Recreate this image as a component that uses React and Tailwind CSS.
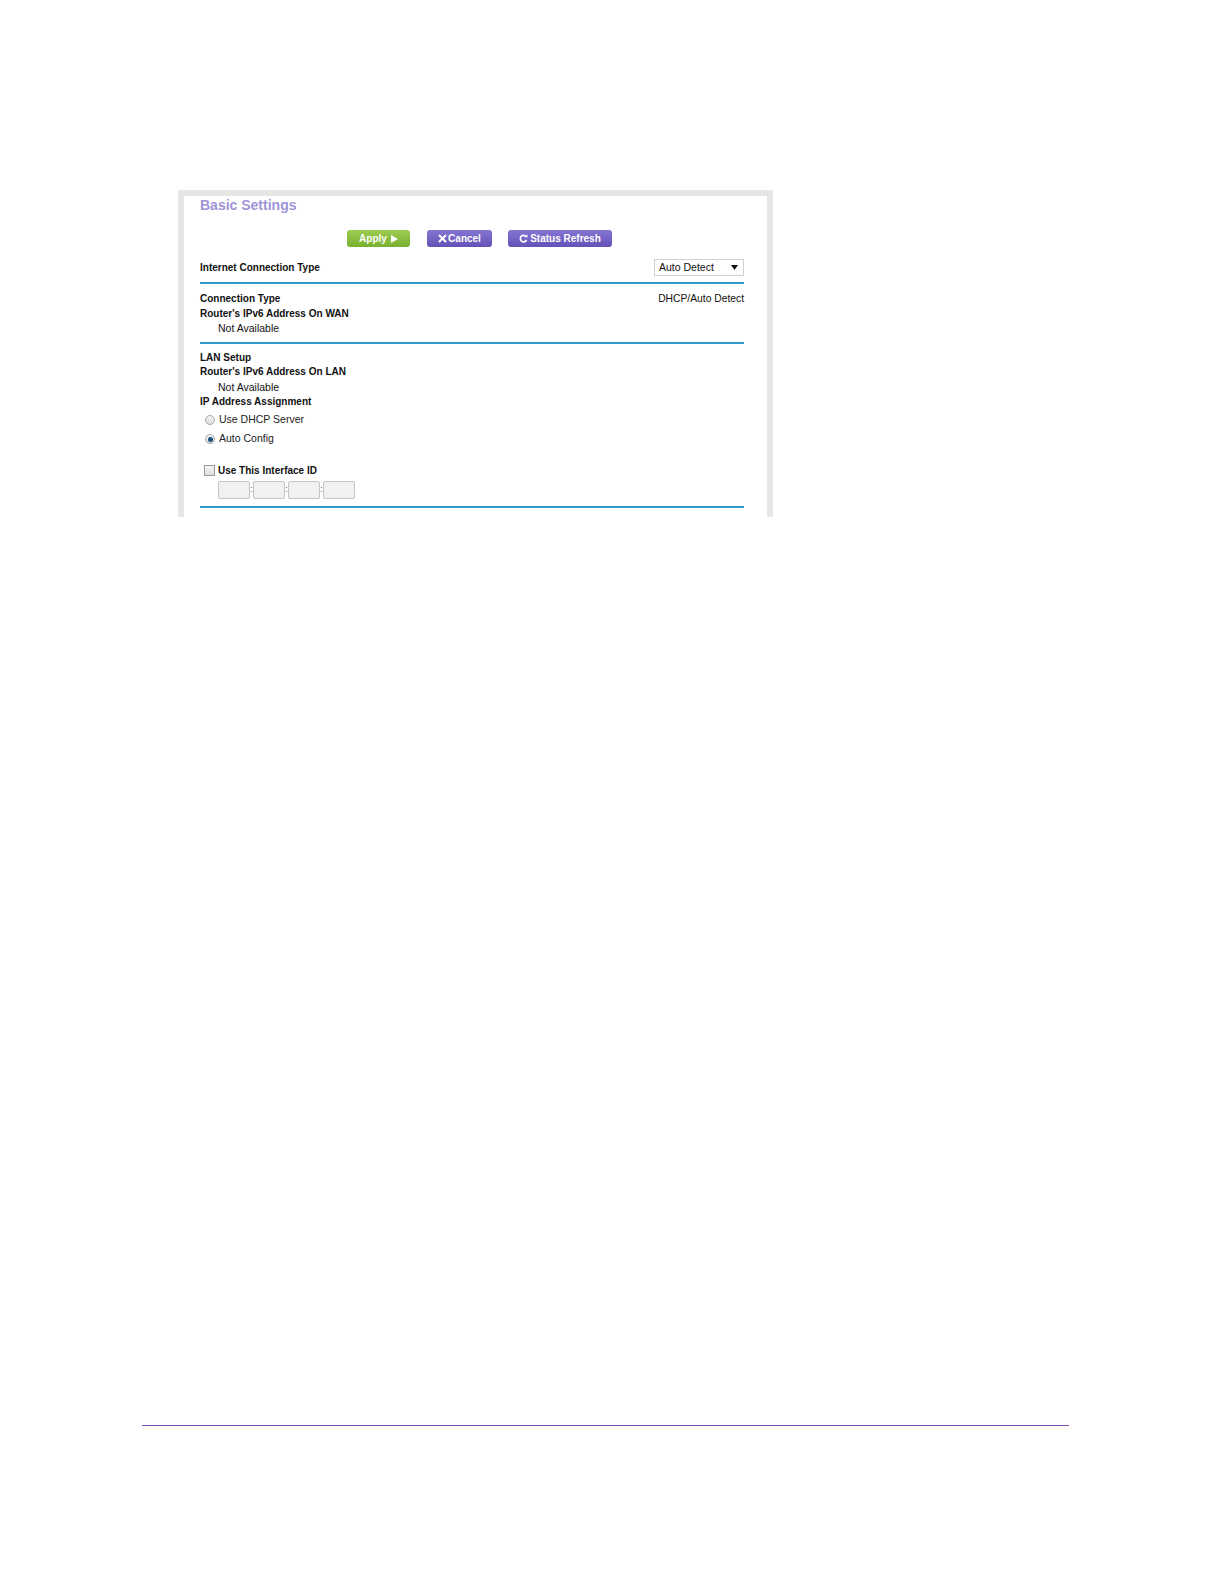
import React from "react";

const font = { fontFamily: '"Liberation Sans", Arial, sans-serif' };

function Radio({ checked, label }) {
  return (
    <div className="flex items-center h-[19px] pl-[5px]">
      <span className="w-[10px] h-[10px] rounded-full border border-[#a8a8a8] bg-gradient-to-b from-[#f4f4f4] to-[#dcdcdc] flex items-center justify-center">
        {checked && <span className="w-[5px] h-[5px] rounded-full bg-[#1d4f7a]" />}
      </span>
      <span className="ml-[4px] text-[10.5px] text-[#222]">{label}</span>
    </div>
  );
}

function IdBox() {
  return <span className="w-[32px] h-[18px] border border-[#c4c4c4] bg-[#f1f1f1] rounded-[2px]" />;
}

export default function App() {
  return (
    <div className="w-full h-[1584px] overflow-hidden bg-white" style={font}>
      <div className="pt-[190px] pl-[178px]">
        <div className="w-[595px] h-[327px] border-t-[6px] border-x-[6px] border-[#e6e6e6] bg-white pl-[16px] pr-[23px]">
          <div className="text-[14px] leading-[18px] font-bold text-[#9d94d8]">Basic Settings</div>
          <div className="flex mt-[16px] pl-[147px] gap-[16px]">
            <div className="w-[63px] h-[17px] rounded-[3px] bg-gradient-to-b from-[#9dcc52] to-[#78b02e] flex items-center justify-center text-white text-[10px] font-bold">
              Apply
              <svg width="7" height="8" viewBox="0 0 7 8" className="ml-[4px]"><path d="M0 0 L7 4 L0 8 Z" fill="white" /></svg>
            </div>
            <div className="w-[65px] h-[17px] rounded-[3px] bg-gradient-to-b from-[#8575d2] to-[#6452b8] flex items-center justify-center text-white text-[10px] font-bold ml-[1px]">
              <svg width="9" height="9" viewBox="0 0 9 9" className="mr-[1px]"><path d="M1 1 L8 8 M8 1 L1 8" stroke="white" strokeWidth="2" /></svg>
              Cancel
            </div>
            <div className="w-[104px] h-[17px] rounded-[3px] bg-gradient-to-b from-[#8575d2] to-[#6452b8] flex items-center justify-center text-white text-[10px] font-bold">
              <svg width="9" height="9" viewBox="0 0 10 10" className="mr-[2px]"><path d="M8 3 A3.6 3.6 0 1 0 8.4 6.5" stroke="white" strokeWidth="1.8" fill="none" /><path d="M6 3.5 L9.5 3.5 L9.5 0.5 Z" fill="white" /></svg>
              Status Refresh
            </div>
          </div>
          <div className="flex items-center justify-between mt-[12px] h-[17px]">
            <span className="text-[10px] font-bold text-[#111]">Internet Connection Type</span>
            <div className="w-[90px] h-[17px] border border-[#d0d0d0] flex items-center justify-between pl-[4px] pr-[5px] text-[10.5px] text-[#111]">
              Auto Detect
              <svg width="7" height="5" viewBox="0 0 7 5"><path d="M0 0 L7 0 L3.5 5 Z" fill="#111" /></svg>
            </div>
          </div>
          <div className="mt-[6px] h-[2px] bg-[#2f9dc8]" />
          <div className="mt-[8px] text-[10.5px] leading-[14.5px] text-[#111]">
            <div className="flex justify-between">
              <span className="font-bold text-[10px]">Connection Type</span>
              <span className="text-[10.3px]">DHCP/Auto Detect</span>
            </div>
            <div className="font-bold text-[10px]">Router's IPv6 Address On WAN</div>
            <div className="pl-[18px]">Not Available</div>
          </div>
          <div className="mt-[6px] h-[2px] bg-[#2f9dc8]" />
          <div className="mt-[7px] text-[10.5px] leading-[14.8px] text-[#111]">
            <div className="font-bold text-[10px]">LAN Setup</div>
            <div className="font-bold text-[10px]">Router's IPv6 Address On LAN</div>
            <div className="pl-[18px]">Not Available</div>
            <div className="font-bold text-[10px]">IP Address Assignment</div>
          </div>
          <div className="mt-[1px]">
            <Radio label="Use DHCP Server" />
            <Radio checked label="Auto Config" />
          </div>
          <div className="mt-[15px] flex items-center h-[14px] pl-[4px]">
            <span className="w-[11px] h-[11px] border border-[#9a9a9a] bg-gradient-to-b from-[#f6f6f6] to-[#dedede]" />
            <span className="ml-[3px] text-[10px] font-bold text-[#111]">Use This Interface ID</span>
          </div>
          <div className="flex items-center pl-[18px] mt-[3px] text-[9px] text-[#555]">
            <IdBox />
            <span className="w-[3px] text-center">:</span>
            <IdBox />
            <span className="w-[3px] text-center">:</span>
            <IdBox />
            <span className="w-[3px] text-center">:</span>
            <IdBox />
          </div>
          <div className="mt-[7px] h-[2px] bg-[#2f9dc8]" />
        </div>
      </div>
      <div className="mt-[908px] ml-[142px] w-[927px] h-[1px] bg-[#7b4fae]" />
    </div>
  );
}
